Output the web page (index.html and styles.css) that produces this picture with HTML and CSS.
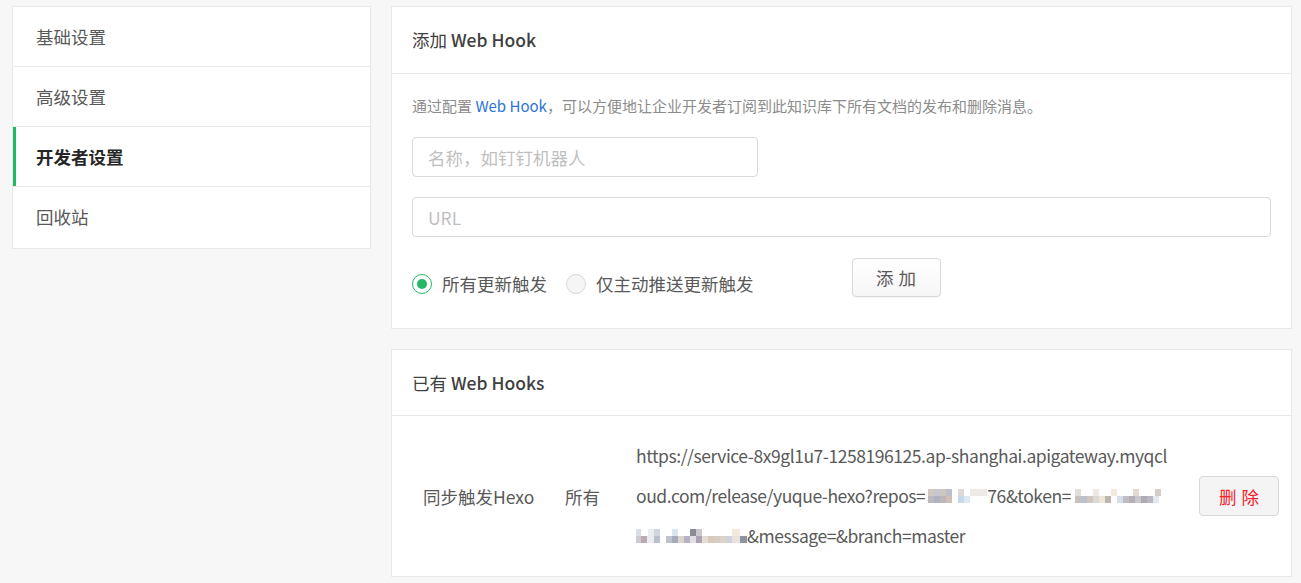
FILE: index.html
```html
<!DOCTYPE html>
<html lang="zh-CN">
<head>
<meta charset="utf-8">
<title>开发者设置</title>
<link rel="stylesheet" href="styles.css">
</head>
<body>
<div class="page">
  <nav class="sidebar">
    <div class="nav-item">基础设置</div>
    <div class="nav-item">高级设置</div>
    <div class="nav-item active">开发者设置</div>
    <div class="nav-item">回收站</div>
  </nav>
  <main class="main">
    <section class="card">
      <header class="card-head">添加 <span class="latin">Web Hook</span></header>
      <div class="card-body add-body">
        <p class="desc">通过配置 <a class="link">Web Hook</a>，可以方便地让企业开发者订阅到此知识库下所有文档的发布和删除消息。</p>
        <input class="input input-name" type="text" placeholder="名称，如钉钉机器人">
        <input class="input input-url" type="text" placeholder="URL">
        <div class="action-row">
          <label class="radio checked"><span class="radio-dot"></span><span>所有更新触发</span></label>
          <label class="radio"><span class="radio-dot"></span><span>仅主动推送更新触发</span></label>
          <button class="btn btn-add"><span class="spaced">添加</span></button>
        </div>
      </div>
    </section>
    <section class="card">
      <header class="card-head card-head-sm">已有 <span class="latin">Web Hooks</span></header>
      <div class="hook-row">
        <div class="cell cell-name">同步触发Hexo</div>
        <div class="cell cell-type">所有</div>
        <div class="cell cell-url">
          <span class="url-line">https://service-8x9gl1u7-1258196125.ap-shanghai.apigateway.myqcl</span>
          <span class="url-line">oud.com/release/yuque-hexo?repos=<span class="mosaic m1"></span>76&amp;token=<span class="mosaic m2"></span></span>
          <span class="url-line"><span class="mosaic m3"></span>&amp;message=&amp;branch=master</span>
        </div>
        <div class="cell cell-op"><button class="btn btn-del"><span class="spaced">删除</span></button></div>
      </div>
    </section>
  </main>
</div>
</body>
</html>
```
FILE: styles.css
```css
* { box-sizing: border-box; }
html, body { margin: 0; padding: 0; }
body {
  background: #f7f7f7;
  font-family: "Noto Sans CJK SC", "Noto Sans", sans-serif;
  font-size: 17.5px;
  color: #595959;
}
.page {
  display: flex;
  align-items: flex-start;
  gap: 20px;
  padding: 6px 9px 0 12px;
}
.sidebar {
  width: 359px;
  flex: none;
  background: #fff;
  border: 1px solid #e8e8e8;
}
.nav-item {
  height: 60px;
  line-height: 59px;
  padding-left: 23px;
  border-bottom: 1px solid #e8e8e8;
  color: #595959;
}
.nav-item:last-child { border-bottom: 0; height: 61px; }
.nav-item.active {
  font-weight: 700;
  color: #262626;
  box-shadow: inset 3px 0 0 #25b864;
}
.main {
  flex: 1;
  display: flex;
  flex-direction: column;
  gap: 20px;
}
.card {
  background: #fff;
  border: 1px solid #e8e8e8;
}
.card-head {
  height: 67px;
  line-height: 66px;
  padding: 0 20px;
  border-bottom: 1px solid #e8e8e8;
  color: #404040;
}
.card-head-sm { height: 66px; line-height: 65px; }
.latin { font-weight: 500; }
.add-body {
  padding: 20px 20px 31px;
  display: flex;
  flex-direction: column;
  align-items: flex-start;
}
.desc {
  margin: 0 0 19px;
  font-size: 15px;
  line-height: 24px;
  color: #8c8c8c;
}
.link { color: #2b74d8; text-decoration: none; }
.input {
  height: 40px;
  border: 1px solid #d9d9d9;
  border-radius: 4px;
  padding: 0 15px;
  font-family: inherit;
  font-size: 17.5px;
  color: #595959;
  background: #fff;
  outline: none;
}
.input::placeholder { color: #bfbfbf; }
.input-name { width: 346px; }
.input-url { width: 100%; margin-top: 20px; }
.action-row {
  margin-top: 21px;
  display: flex;
  align-items: flex-end;
  height: 39px;
}
.radio {
  display: flex;
  align-items: center;
  gap: 10px;
  height: 26px;
  line-height: 26px;
  margin-right: 19px;
  color: #595959;
}
.radio-dot {
  width: 20px;
  height: 20px;
  border-radius: 50%;
  border: 1px solid #d9d9d9;
  background: #f5f5f5;
  position: relative;
  flex: none;
}
.radio.checked .radio-dot {
  border-color: #25b864;
  background: #fff;
}
.radio.checked .radio-dot::after {
  content: "";
  position: absolute;
  left: 4px; top: 4px;
  width: 10px; height: 10px;
  border-radius: 50%;
  background: #25b864;
}
.btn {
  font-family: inherit;
  font-size: 17.5px;
  border: 1px solid #d9d9d9;
  border-radius: 4px;
  padding: 0;
  display: flex;
  align-items: center;
  justify-content: center;
}
.spaced { letter-spacing: 0.3em; margin-right: -0.3em; }
.btn-add {
  margin-left: 79px;
  align-self: flex-start;
  width: 89px;
  height: 39px;
  color: #595959;
  background: linear-gradient(#ffffff, #f6f6f6);
  box-shadow: 0 1px 1px rgba(0,0,0,0.04);
}
.hook-row {
  display: flex;
  align-items: center;
  padding: 20px 0;
}
.cell-name { width: 173px; padding-left: 31px; flex: none; }
.cell-type { width: 71px; flex: none; }
.cell-url {
  width: 545px;
  flex: none;
  display: flex;
  flex-direction: column;
  line-height: 40px;
  letter-spacing: -0.45px;
  font-family: "Noto Sans CJK SC", sans-serif;
}
.url-line { white-space: nowrap; display: flex; align-items: center; }
.cell-op { margin-left: auto; margin-right: 12px; }
.btn-del {
  width: 80px;
  height: 40px;
  background: #f4f4f4;
  color: #f5222d;
}
.mosaic {
  display: inline-block;
  height: 14px;
  flex: none;
}
.m1 {
  width: 62px;
  background:
    linear-gradient(90deg, #ffffff 0 3px, #d2c8bf 3px 9px, #c3c8d2 9px 15px, #cfc6be 15px 21px, #bcc0c8 21px 27px, #ffffff 27px 33px, #ddd9d6 33px 39px, #ffffff 39px 45px, #eeeae6 45px 62px) top / 100% 50% no-repeat,
    linear-gradient(90deg, #ffffff 0 3px, #bcb8be 3px 9px, #aeb2be 9px 15px, #beb7ba 15px 21px, #d3bfb5 21px 27px, #ffffff 27px 33px, #c4d9ec 33px 39px, #dfe9f4 39px 45px, #ffffff 45px 62px) bottom / 100% 50% no-repeat;
}
.m2 {
  width: 100px;
  background:
    linear-gradient(90deg, #ffffff 0 4px, #e2ded9 4px 10px, #ffffff 10px 22px, #ebe7e3 22px 28px, #ffffff 28px 40px, #f1e9dc 40px 46px, #ffffff 46px 62px, #e2d9cf 62px 68px, #ffffff 68px 84px, #d4ccc7 84px 90px, #ffffff 90px 100px) top / 100% 50% no-repeat,
    linear-gradient(90deg, #ffffff 0 4px, #c6c1bd 4px 10px, #bbc1cd 10px 16px, #d1c6bf 16px 22px, #ded8d3 22px 28px, #efe6da 28px 34px, #bdb6b0 34px 40px, #ffffff 40px 46px, #d5dfea 46px 52px, #bfbcc3 52px 58px, #b2afb8 58px 64px, #ccc6cd 64px 70px, #acabb6 70px 76px, #bab7c2 76px 82px, #e2e7f0 82px 88px, #ffffff 88px 100px) bottom / 100% 50% no-repeat;
}
.m3 {
  width: 111px;
  background:
    linear-gradient(90deg, #dadee5 0 5px, #ffffff 5px 12px, #e9edf2 12px 18px, #d0d5de 18px 24px, #ffffff 24px 36px, #dce4ee 36px 42px, #ffffff 42px 54px, #8a8c94 54px 60px, #ccc9ce 60px 66px, #ffffff 66px 96px, #f2eadf 96px 104px, #ffffff 104px 111px) top / 100% 50% no-repeat,
    linear-gradient(90deg, #ceccd2 0 5px, #bca9b1 5px 11px, #e9ecf0 11px 18px, #b8c0cc 18px 24px, #ffffff 24px 30px, #bfc3ce 30px 36px, #a6abb9 36px 42px, #dbd3ce 42px 48px, #b8b0c5 48px 54px, #e1dee1 54px 60px, #a9a3b5 60px 66px, #e6ddd2 66px 72px, #d9c9bb 72px 78px, #d8ccc2 78px 84px, #ddd3c9 84px 90px, #ced2dc 90px 96px, #e8e3dd 96px 104px, #8c94a2 104px 111px) bottom / 100% 50% no-repeat;
}
```
